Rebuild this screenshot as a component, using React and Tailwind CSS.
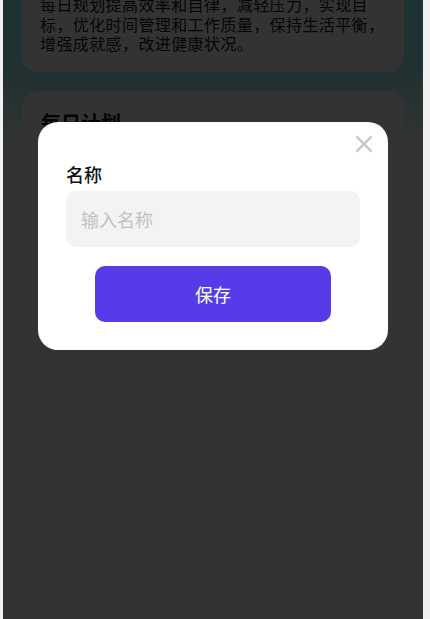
import React, { useState } from 'react';
import { X } from 'lucide-react';

const FONT = { fontFamily: '"Noto Sans CJK SC", "Noto Sans", sans-serif' };

export default function App() {
  const [open, setOpen] = useState(true);
  const [name, setName] = useState('');

  return (
    <div className="w-full h-[619px] bg-[#f0f0f0] flex" style={FONT}>
      <div className="ml-[3px] w-[420px] h-full relative overflow-hidden bg-[#ffffff]">
        {/* page behind the mask */}
        <div className="absolute inset-x-0 top-0 h-[150px] bg-gradient-to-b from-[#90f8fc] via-[#a8f2f4] to-[#ffffff]" />
        <div className="relative px-[19px] flex flex-col gap-[19px]">
          <div className="-mt-6 bg-white rounded-2xl px-[18px] pt-[19px] pb-[18px] text-[16px] leading-[19.5px] tracking-[0.4px] text-[#222]">
            每日规划提高效率和自律，减轻压力，实现目标，优化时间管理和工作质量，保持生活平衡，增强成就感，改进健康状况。
          </div>
          <div className="bg-white rounded-2xl px-[19px] pt-[19px] h-[170px]">
            <h2 className="text-[20px] leading-[26px] font-bold text-[#111]">每日计划</h2>
          </div>
        </div>
        <div className="absolute left-[45px] right-[20px] top-[554px] text-[15px] leading-[25px] text-[#f4f4f4]">
          <p className="pl-[110px]">在这里添加您的每日计划事项</p>
          <p>专注当下，完成每一个小目标，积累更好的自己</p>
        </div>

        {open && (
          <div className="absolute inset-0 bg-black/80">
            <div className="absolute left-[35px] top-[122px] w-[350px] bg-white rounded-[20px] px-[28px] pt-[40px] pb-[28px]">
              <button onClick={() => setOpen(false)} className="absolute right-[10px] top-[8px] text-[#c4c4c4]">
                <X size={28} strokeWidth={2} />
              </button>
              <div className="text-[18px] leading-[24px] font-medium text-[#111] mb-[5px]">名称</div>
              <input
                value={name}
                onChange={e => setName(e.target.value)}
                placeholder="输入名称"
                className="w-full h-[56px] rounded-[10px] bg-[#f3f3f3] px-[15px] text-[18px] text-[#333] placeholder:text-[#c2c2c2] outline-none"
              />
              <div className="flex justify-center mt-[19px]">
                <button className="w-[236px] h-[56px] rounded-[10px] bg-[#553ce8] text-white text-[18px]">保存</button>
              </div>
            </div>
          </div>
        )}
      </div>
    </div>
  );
}
